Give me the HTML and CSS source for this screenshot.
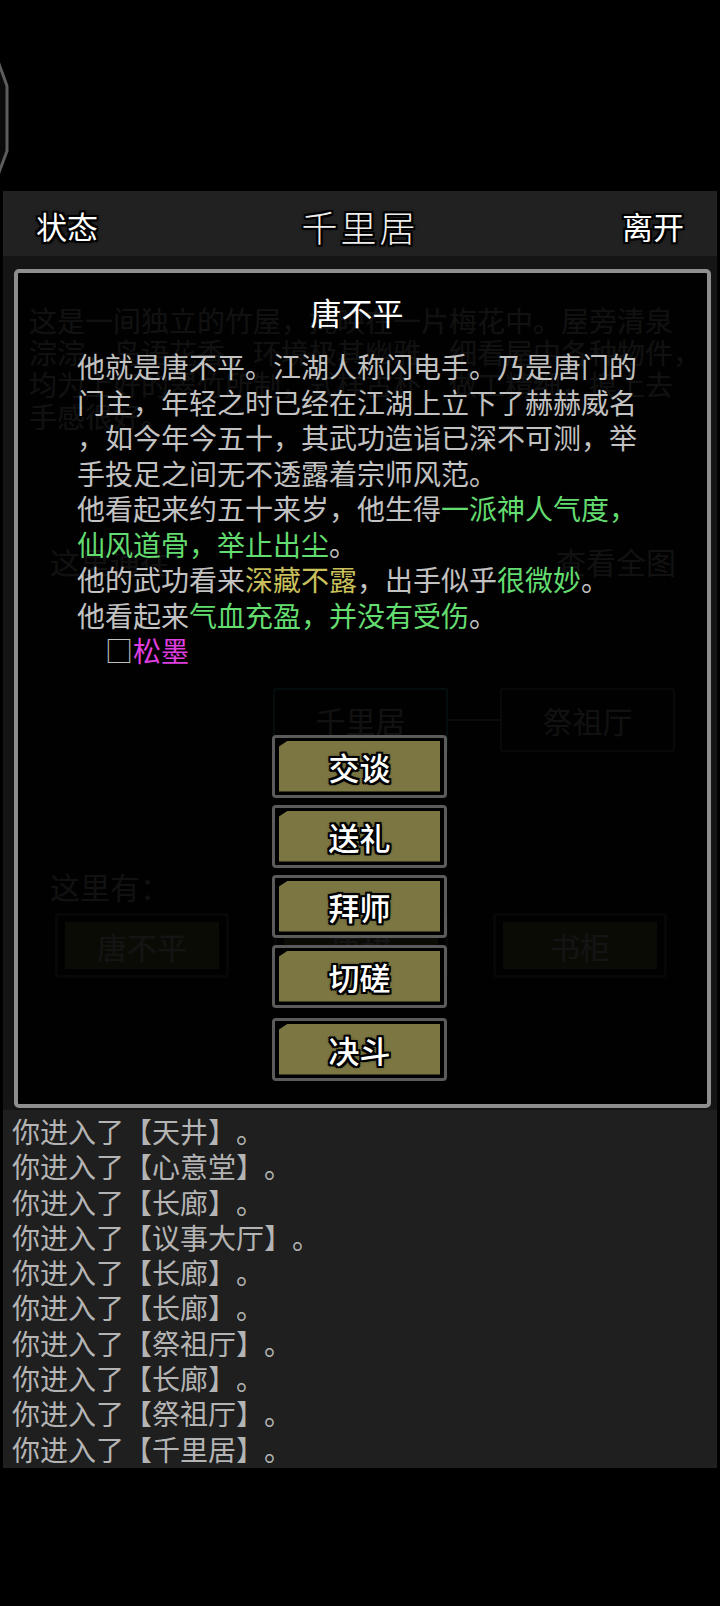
FILE: index.html
```html
<!DOCTYPE HTML>
<html lang="zh-CN">
<head>
	<meta charset="UTF-8" />
	<title>千里居</title>
	<link rel="stylesheet" href="styles.css">
</head>
<body>
	<div class="sideTab">
		<svg width="12" height="120" viewBox="0 0 12 120">
			<path d="M-2 2 L7 27 L7 92 L-2 116" fill="#0a0a0a" stroke="#5c5c5c" stroke-width="3" />
		</svg>
	</div>

	<div id="screen">
		<div class="topbar">
			<span class="barBtn">状态</span>
			<span class="barTitle">千里居</span>
			<span class="barBtn">离开</span>
		</div>

		<div class="room">
			<p class="desc">
				<span class="ln">这是一间独立的竹屋，掩映在一片梅花中。屋旁清泉</span>
				<span class="ln">淙淙，鸟语花香，环境极其幽雅，细看屋中各种物件，</span>
				<span class="ln">均为上好的翠竹所制，式样古朴，做工精细，摸上去</span>
				<span class="ln">手感很好。</span>
			</p>
			<div class="exitsHead">
				<span>这里通往：</span>
				<span>查看全图</span>
			</div>
			<div class="map">
				<div class="mapBox current">千里居</div>
				<div class="mapLink"></div>
				<div class="mapBox">祭祖厅</div>
			</div>
			<div class="hereHead">这里有：</div>
			<div class="items">
				<div class="item"><span>唐不平</span></div>
				<div class="item"><span>唐甜</span></div>
				<div class="item"><span>书柜</span></div>
			</div>

			<div class="dialog">
				<div class="dlgCol">
					<div class="dlgTitle">唐不平</div>
					<p class="bio">
						<span class="ln">他就是唐不平。江湖人称闪电手。乃是唐门的</span>
						<span class="ln">门主，年轻之时已经在江湖上立下了赫赫威名</span>
						<span class="ln">，如今年今五十，其武功造诣已深不可测，举</span>
						<span class="ln">手投足之间无不透露着宗师风范。</span>
						<span class="ln">他看起来约五十来岁，他生得<em class="green">一派神人气度，</em></span>
						<span class="ln"><em class="green">仙风道骨，举止出尘</em>。</span>
						<span class="ln">他的武功看来<em class="yellow">深藏不露</em>，出手似乎<em class="green">很微妙</em>。</span>
						<span class="ln">他看起来<em class="green">气血充盈，并没有受伤</em>。</span>
						<span class="ln">　□<em class="magenta">松墨</em></span>
					</p>
					<div class="actions">
						<div class="act"><span>交谈</span></div>
						<div class="act"><span>送礼</span></div>
						<div class="act"><span>拜师</span></div>
						<div class="act"><span>切磋</span></div>
						<div class="act last"><span>决斗</span></div>
					</div>
				</div>
			</div>
		</div>

		<div class="log">
			<div>你进入了【天井】。</div>
			<div>你进入了【心意堂】。</div>
			<div>你进入了【长廊】。</div>
			<div>你进入了【议事大厅】。</div>
			<div>你进入了【长廊】。</div>
			<div>你进入了【长廊】。</div>
			<div>你进入了【祭祖厅】。</div>
			<div>你进入了【长廊】。</div>
			<div>你进入了【祭祖厅】。</div>
			<div>你进入了【千里居】。</div>
		</div>
	</div>
</body>
</html>
```

FILE: styles.css
```css
body {
	margin: 0;
	background: #000;
	font-family: "Noto Sans CJK SC", "Noto Sans", sans-serif;
	color: #bbb;
	text-spacing-trim: space-all;
}
p {
	margin: 0;
}
em {
	font-style: normal;
}
.ln {
	display: block;
	white-space: nowrap;
}

.sideTab {
	position: absolute;
	left: 0;
	top: 59px;
	line-height: 0;
}

#screen {
	margin: 191px 3px 0;
}

/* top bar */

.topbar {
	height: 65px;
	box-sizing: border-box;
	padding: 5px 33px 0;
	background: #212121;
	display: flex;
	align-items: center;
	justify-content: space-between;
	color: #fff;
	text-shadow: -2px -2px 0 #000, 2px -2px 0 #000, -2px 2px 0 #000, 2px 2px 0 #000,
		0 -2px 0 #000, 0 2px 0 #000, -2px 0 0 #000, 2px 0 0 #000, 0 0 5px #000;
}
.barBtn {
	font-size: 31px;
	line-height: 40px;
}
.barTitle {
	font-size: 36px;
	font-weight: 300;
	letter-spacing: 3px;
	line-height: 40px;
	color: #eee;
}

/* room behind the dialog */

.room {
	position: relative;
	height: 854px;
	box-sizing: border-box;
	padding-top: 48px;
	background: #151515;
	font-size: 28px;
}
.desc {
	margin-left: 26px;
	line-height: 32px;
}
.exitsHead {
	display: flex;
	justify-content: space-between;
	margin: 111px 41px 0 47px;
	font-size: 30px;
	line-height: 36px;
}
.map {
	display: flex;
	align-items: center;
	margin-top: 109px;
	padding-left: 270px;
}
.mapBox {
	width: 175px;
	height: 64px;
	box-sizing: border-box;
	border: 2px solid #666;
	border-radius: 3px;
	display: flex;
	align-items: center;
	justify-content: center;
	font-size: 30px;
}
.mapBox.current {
	border-color: #2f8c8c;
}
.mapLink {
	width: 52px;
	height: 2px;
	background: #777;
}
.hereHead {
	margin: 116px 0 0 47px;
	font-size: 30px;
	line-height: 36px;
}
.items {
	display: flex;
	gap: 45px;
	margin-top: 9px;
	padding-left: 52px;
}
.item {
	width: 174px;
	height: 65px;
	box-sizing: border-box;
	border: 3px solid #555;
	border-radius: 4px;
	padding: 6px 7px;
}
.item span {
	display: flex;
	height: 100%;
	align-items: center;
	justify-content: center;
	background: #7b7642;
	font-size: 30px;
	color: #ddd;
}

/* dialog */

.dialog {
	position: absolute;
	top: 13px;
	left: 11px;
	right: 6px;
	bottom: 2px;
	border: 4px solid #8e8e8e;
	border-radius: 5px;
	background: rgba(0, 0, 0, 0.91);
}
.dlgCol {
	width: 560px;
	margin-left: 59px;
	padding-top: 21px;
}
.dlgTitle {
	text-align: center;
	font-size: 31px;
	line-height: 36px;
	color: #fff;
}
.bio {
	margin-top: 19px;
	font-size: 28px;
	line-height: 35.5px;
	color: #c2c2c2;
}
.green {
	color: #63dc70;
}
.yellow {
	color: #c9c05c;
}
.magenta {
	color: #e03ee0;
}

.actions {
	display: flex;
	flex-direction: column;
	align-items: center;
	gap: 7px;
	margin: 66px 0 0 5px;
}
.act {
	width: 175px;
	height: 63px;
	box-sizing: border-box;
	border: 3px solid #5b5b5b;
	border-radius: 4px;
	padding: 3px 4px;
	background: #000;
}
.act.last {
	margin-top: 3px;
}
.act span {
	display: flex;
	height: 100%;
	align-items: center;
	justify-content: center;
	background: #7b7642;
	clip-path: polygon(9px 0, 100% 0, 100% 100%, 0 100%, 0 6px);
	font-size: 31px;
	font-weight: 500;
	color: #fff;
	text-shadow: -2px -2px 0 #000, 2px -2px 0 #000, -2px 2px 0 #000, 2px 2px 0 #000,
		0 -2px 0 #000, 0 2px 0 #000, -2px 0 0 #000, 2px 0 0 #000, 0 0 4px #000;
}

/* message log */

.log {
	background: #1f1f1f;
	padding: 4px 9px 1px;
	font-size: 28px;
	line-height: 35.3px;
	color: #b4b4b4;
}
```
